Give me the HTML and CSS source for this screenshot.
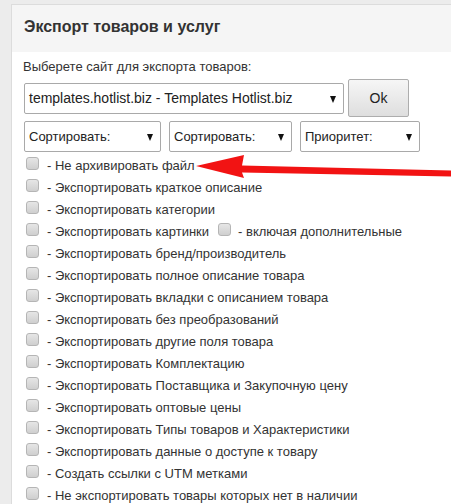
FILE: index.html
```html
<!DOCTYPE html>
<html lang="ru">
<head>
<meta charset="utf-8">
<link rel="stylesheet" href="styles.css">
</head>
<body>
<div class="panel">
  <div class="panel-head">Экспорт товаров и услуг</div>
  <div class="panel-body">
    <div class="prompt">Выберете сайт для экспорта товаров:</div>
    <div class="site-row">
      <span class="sel sel-site"><span class="sel-text">templates.hotlist.biz - Templates Hotlist.biz</span></span>
      <button class="btn-ok">Ok</button>
    </div>
    <div class="sort-row">
      <span class="sel sel-a"><span class="sel-text">Сортировать:</span></span>
      <span class="sel sel-b"><span class="sel-text">Сортировать:</span></span>
      <span class="sel sel-c"><span class="sel-text">Приоритет:</span></span>
    </div>
    <ul class="opts">
      <li><span class="cb"></span><span class="lbl">- Не архивировать файл</span></li>
      <li><span class="cb"></span><span class="lbl">- Экспортировать краткое описание</span></li>
      <li><span class="cb"></span><span class="lbl">- Экспортировать категории</span></li>
      <li><span class="cb"></span><span class="lbl">- Экспортировать картинки</span><span class="cb cb-inline"></span><span class="lbl">- включая дополнительные</span></li>
      <li><span class="cb"></span><span class="lbl">- Экспортировать бренд/производитель</span></li>
      <li><span class="cb"></span><span class="lbl">- Экспортировать полное описание товара</span></li>
      <li><span class="cb"></span><span class="lbl">- Экспортировать вкладки с описанием товара</span></li>
      <li><span class="cb"></span><span class="lbl">- Экспортировать без преобразований</span></li>
      <li><span class="cb"></span><span class="lbl">- Экспортировать другие поля товара</span></li>
      <li><span class="cb"></span><span class="lbl">- Экспортировать Комплектацию</span></li>
      <li><span class="cb"></span><span class="lbl">- Экспортировать Поставщика и Закупочную цену</span></li>
      <li><span class="cb"></span><span class="lbl">- Экспортировать оптовые цены</span></li>
      <li><span class="cb"></span><span class="lbl">- Экспортировать Типы товаров и Характеристики</span></li>
      <li><span class="cb"></span><span class="lbl">- Экспортировать данные о доступе к товару</span></li>
      <li><span class="cb"></span><span class="lbl">- Создать ссылки с UTM метками</span></li>
      <li><span class="cb"></span><span class="lbl">- Не экспортировать товары которых нет в наличии</span></li>
    </ul>
  </div>
</div>
<svg class="arrow" width="256" height="30" viewBox="0 0 256 30">
  <polygon points="0,12 48,1 46,11.5 256,16.5 256,22.5 46,18.5 48,24" fill="#f21313"/>
</svg>
</body>
</html>
```
FILE: styles.css
```css
html, body {
  margin: 0;
  padding: 0;
}
body {
  background: #ececec;
  font-family: "Liberation Sans", Arial, sans-serif;
  color: #333;
  width: 451px;
  height: 504px;
  overflow: hidden;
  position: relative;
}
.panel {
  margin: 4px 0 0 11px;
  border: 1px solid #dcdcdc;
  border-right: none;
  border-bottom: none;
  background: #fff;
  height: 500px;
}
.panel-head {
  height: 47px;
  background: #f5f5f5;
  box-sizing: border-box;
  padding: 13px 0 0 12px;
  font-size: 16px;
  font-weight: bold;
  color: #333;
}
.panel-body {
  padding: 7px 0 0 11px;
}
.prompt {
  font-size: 13px;
  line-height: 15px;
  color: #333;
}
.site-row {
  display: flex;
  align-items: center;
  gap: 4px;
  margin-top: 5px;
}
.sort-row {
  display: flex;
  gap: 8px;
  margin-top: 4px;
  margin-left: 1px;
}
.site-row .sel { margin-left: 1px; }
.sel {
  position: relative;
  display: flex;
  align-items: center;
  box-sizing: border-box;
  height: 31px;
  border: 1px solid #a9a9a9;
  border-radius: 2px;
  background: #fff;
  padding-left: 4px;
  color: #222;
  font-size: 13px;
}
.sel::after {
  content: "";
  position: absolute;
  right: 7px;
  top: 12px;
  border-left: 3.5px solid transparent;
  border-right: 3.5px solid transparent;
  border-top: 7px solid #111;
}
.sel-site { width: 320px; font-size: 14px; }
.sel-a { width: 137px; }
.sel-b { width: 123px; }
.sel-c { width: 120px; }
.btn-ok {
  width: 61px;
  height: 38px;
  border: 1px solid #adadad;
  border-radius: 2px;
  background: linear-gradient(#f6f6f6, #dedede);
  font-family: "Liberation Sans", Arial, sans-serif;
  font-size: 14px;
  color: #222;
  padding: 0;
}
.opts {
  list-style: none;
  margin: 2px 0 0 0;
  padding: 0;
}
.opts li {
  display: flex;
  align-items: center;
  height: 22px;
  font-size: 13px;
  color: #333;
}
.cb {
  width: 13px;
  height: 13px;
  box-sizing: border-box;
  border: 1px solid #b5b5b5;
  border-radius: 3px;
  background: linear-gradient(#e6e6e6, #cfcfcf);
  margin: -3px 0 0 3px;
  flex: none;
}
.lbl {
  margin-left: 8px;
}
.cb-inline {
  margin-left: 9px;
  margin-right: 7px;
}
.cb-inline + .lbl { margin-left: 0; }
.arrow {
  position: absolute;
  left: 196px;
  top: 154px;
}
```
